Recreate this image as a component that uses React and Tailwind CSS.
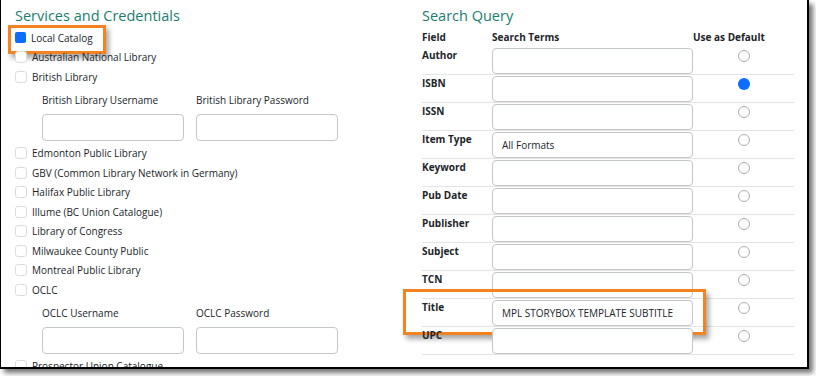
import React from 'react';

const font = { fontFamily: '"Open Sans", "Noto Sans", sans-serif' };

const services = [
  { name: 'Local Catalog', checked: true, highlight: true },
  { name: 'Australian National Library' },
  { name: 'British Library', creds: ['British Library Username', 'British Library Password'] },
  { name: 'Edmonton Public Library' },
  { name: 'GBV (Common Library Network in Germany)' },
  { name: 'Halifax Public Library' },
  { name: 'Illume (BC Union Catalogue)' },
  { name: 'Library of Congress' },
  { name: 'Milwaukee County Public' },
  { name: 'Montreal Public Library' },
  { name: 'OCLC', creds: ['OCLC Username', 'OCLC Password'] },
  { name: 'Prospector Union Catalogue' },
];

const fields = [
  { label: 'Author' },
  { label: 'ISBN', isDefault: true },
  { label: 'ISSN' },
  { label: 'Item Type', value: 'All Formats' },
  { label: 'Keyword' },
  { label: 'Pub Date' },
  { label: 'Publisher' },
  { label: 'Subject' },
  { label: 'TCN' },
  { label: 'Title', value: 'MPL STORYBOX TEMPLATE SUBTITLE', highlight: true },
  { label: 'UPC' },
];

function Checkbox({ checked }) {
  return checked ? (
    <span className="w-[11px] h-[11px] rounded-[2px] bg-[#0d6efd] shrink-0" />
  ) : (
    <span className="w-[12px] h-[12px] rounded-[3px] border border-[#dadde0] bg-white shrink-0" />
  );
}

function ServiceRow({ service }) {
  return (
    <div>
      <div className="relative h-[19.5px] flex items-center gap-[5px]">
        <Checkbox checked={service.checked} />
        <span className="text-[10px] text-[#212529] leading-none">{service.name}</span>
        {service.highlight && (
          <div className="absolute left-[-7px] top-[-3px] w-[98px] h-[29px] border-[3px] border-[#f58220] shadow-[3px_4px_5px_rgba(0,0,0,0.35)]" />
        )}
      </div>
      {service.creds && (
        <div className="flex gap-[12px] pl-[27px] pt-[6px] pb-[3px]">
          {service.creds.map((c) => (
            <div key={c} className="flex flex-col">
              <span className="text-[10px] leading-[14px] text-[#212529]">{c}</span>
              <div className="mt-[7px] w-[142px] h-[27px] rounded-[4px] border border-[#c3c7cb] bg-white" />
            </div>
          ))}
        </div>
      )}
    </div>
  );
}

function FieldRow({ field }) {
  return (
    <div className="relative flex border-b border-[#e2e4e7] h-[28px]">
      <div className="w-[70px] pt-[0px] text-[10px] font-bold text-[#212529] leading-[16px]">{field.label}</div>
      <div className="pt-[1px]">
        <div className="w-[201px] h-[26px] rounded-[4px] border border-[#c3c7cb] bg-white flex items-center px-[9px] text-[10px] text-[#212529]">
          {field.value}
        </div>
      </div>
      <div className="flex-1 flex justify-center pt-[3px]">
        {field.isDefault ? (
          <span className="w-[12px] h-[12px] rounded-full bg-[#0d6efd]" />
        ) : (
          <span className="w-[12px] h-[12px] rounded-full border border-[#a8acb0] bg-white" />
        )}
      </div>
      {field.highlight && (
        <div className="absolute left-[-19px] top-[-10px] w-[303px] h-[46px] border-[3px] border-[#f58220] shadow-[3px_4px_5px_rgba(0,0,0,0.35)]" />
      )}
    </div>
  );
}

export default function App() {
  return (
    <div className="w-[816px] h-[376px] bg-white" style={font}>
      <div className="w-[809px] h-[369px] border-l border-r-2 border-b-2 border-black overflow-hidden bg-white shadow-[4px_4px_5px_rgba(0,0,0,0.55)] flex">
        {/* Services */}
        <div className="w-[406px] pl-[14px] pt-[4px]">
          <h2 className="text-[14.5px] leading-[24px] text-[#1a7d71]">Services and Credentials</h2>
          <div>
            {services.map((s) => (
              <ServiceRow key={s.name} service={s} />
            ))}
          </div>
        </div>

        {/* Search Query */}
        <div className="pl-[15px] pt-[4px] w-[387px]">
          <h2 className="text-[14.5px] leading-[24px] text-[#1a7d71]">Search Query</h2>
          <div className="flex h-[19px] items-center text-[10px] font-bold text-[#212529]">
            <span className="w-[70px]">Field</span>
            <span className="w-[201px]">Search Terms</span>
            <span>Use as Default</span>
          </div>
          {fields.map((f) => (
            <FieldRow key={f.label} field={f} />
          ))}
        </div>
      </div>
    </div>
  );
}
